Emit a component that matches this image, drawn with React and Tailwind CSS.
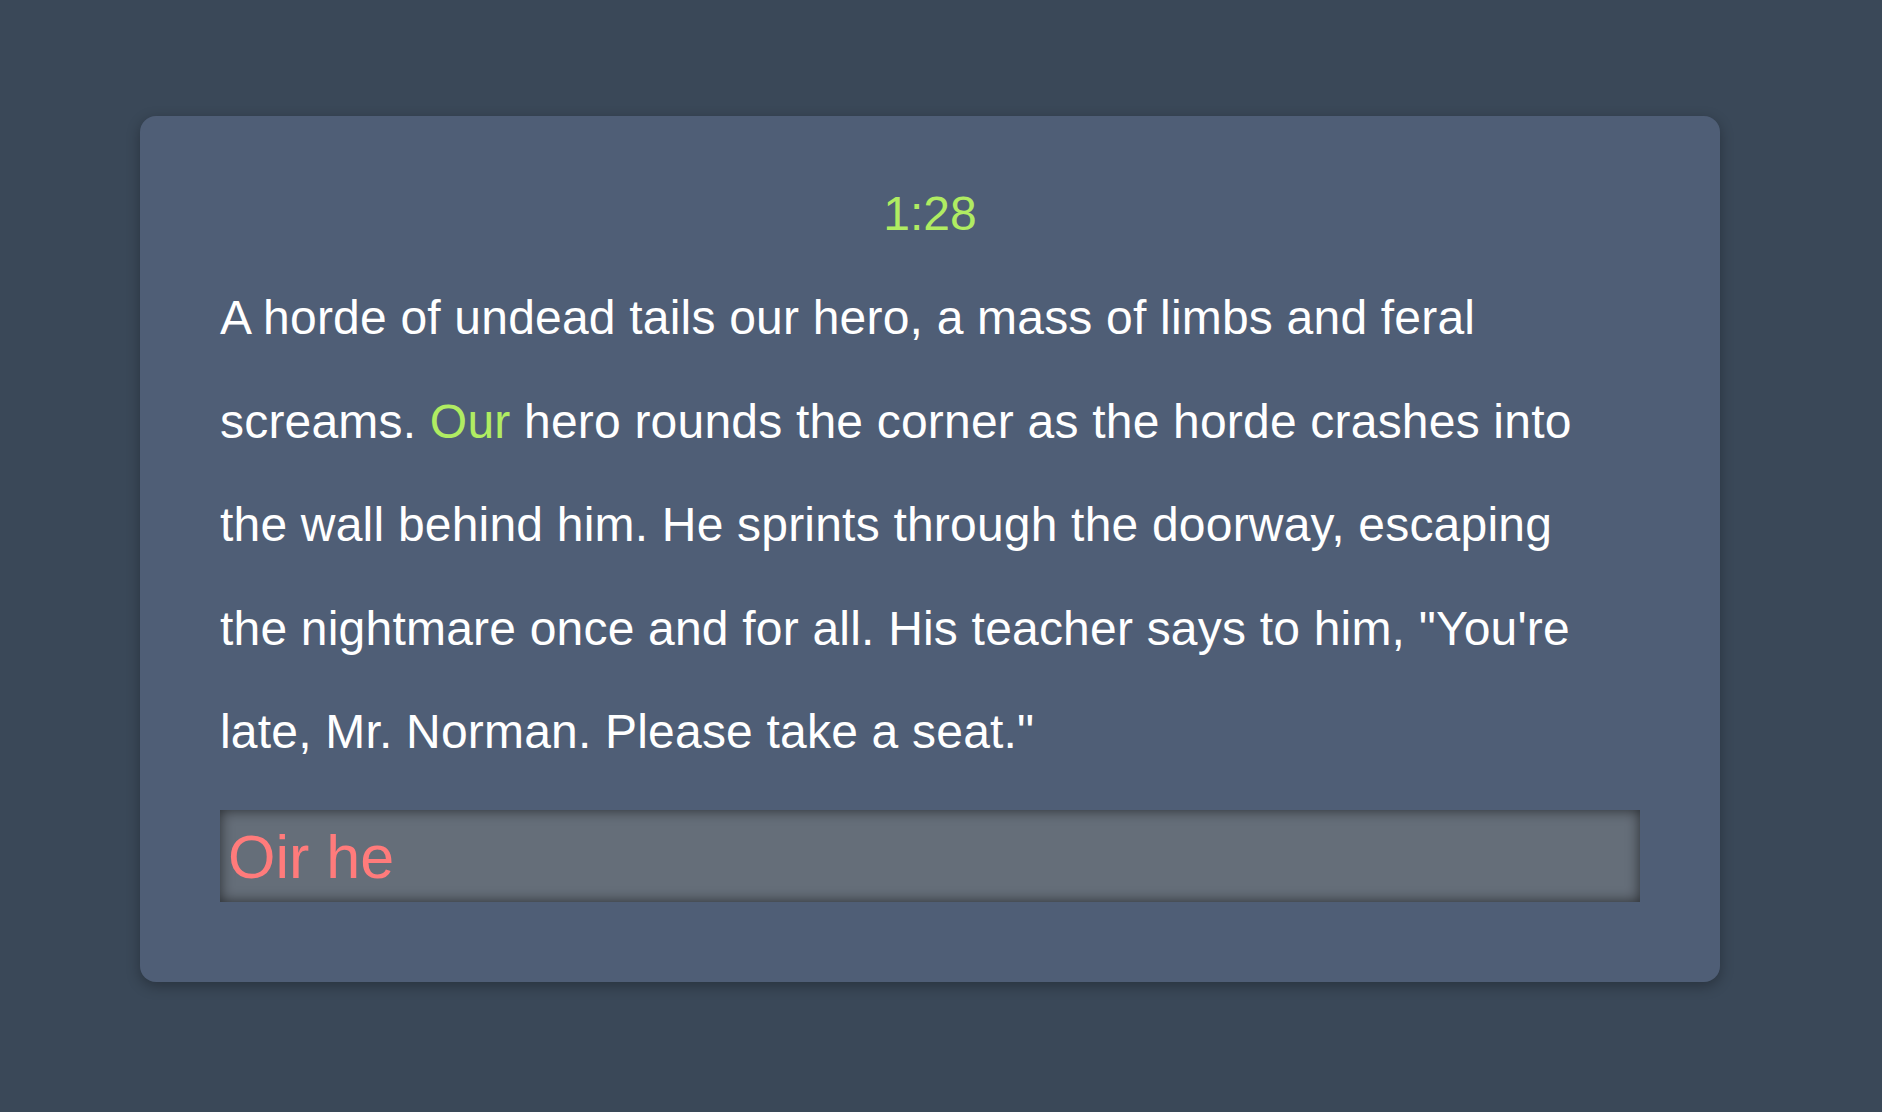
const passage = [
  { text: 'A horde of undead tails our hero, a mass of limbs and feral screams. ' },
  { text: 'Our', current: true },
  { text: ' hero rounds the corner as the horde crashes into the wall behind him. He sprints through the doorway, escaping the nightmare once and for all. His teacher says to him, "You\'re late, Mr. Norman. Please take a seat."' },
];

export default function App() {
  return (
    <div className="min-h-[1112px] w-full bg-[#3a4858] pt-[116px] font-['Liberation_Sans',Arial,sans-serif]">
      <div className="ml-[140px] w-[1580px] h-[866px] rounded-2xl bg-[#4f5e76] px-20 pt-[74px] shadow-[0_4px_14px_rgba(0,0,0,0.3)]">
        {/* timer */}
        <div className="text-center text-[48px] leading-none text-[#b0ec62]">1:28</div>

        <p className="mt-[28px] pr-[40px] text-[48px] leading-[103.6px] tracking-[0.2px] text-white">
          {passage.map((part, i) => (
            <span key={i} className={part.current ? 'text-[#b0ec62]' : ''}>{part.text}</span>
          ))}
        </p>

        <div className="mt-[26px] flex h-[92px] items-center bg-[#656e79] px-[8px] pt-[4px] shadow-[inset_0_0_14px_rgba(0,0,0,0.6)]">
          <span className="text-[61px] text-[#ff7b7b]">Oir he</span>
        </div>
      </div>
    </div>
  );
}
